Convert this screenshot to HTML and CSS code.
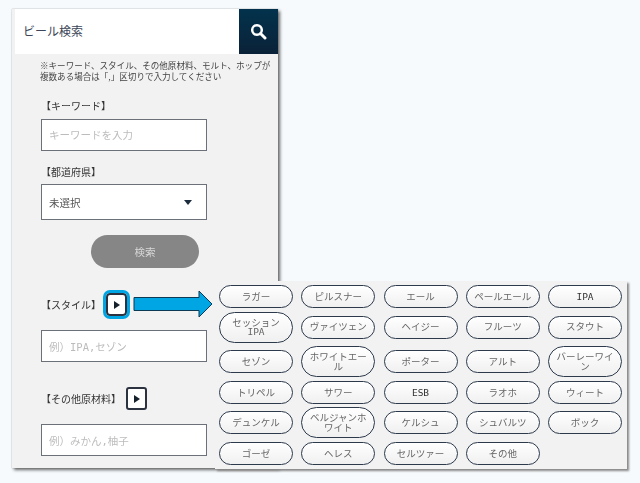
FILE: index.html
```html
<!DOCTYPE html>
<html lang="ja">
<head>
<meta charset="utf-8">
<title>ビール検索</title>
<link rel="stylesheet" href="styles.css">
</head>
<body>
<main class="panel">
  <header class="head">
    <h1 class="title">ビール検索</h1>
    <div class="search-btn">
      <svg width="17" height="17" viewBox="0 0 17 17"><circle cx="7" cy="7" r="4.8" fill="none" stroke="#fff" stroke-width="2.500"/><path d="M10.500 10.500L15 15" stroke="#fff" stroke-width="3" stroke-linecap="round"/></svg>
    </div>
  </header>
  <p class="note">※キーワード、スタイル、その他原材料、モルト、ホップが<br>複数ある場合は「,」区切りで入力してください</p>
  <div class="form">
    <div class="label label-key">【キーワード】</div>
    <div class="field field-input field-key ph">キーワードを入力</div>
    <div class="label label-pref">【都道府県】</div>
    <div class="field field-select"><span>未選択</span><i class="caret"></i></div>
    <div class="submit">検索</div>
    <div class="label-row row-style">
      <span class="label">【スタイル】</span>
      <span class="toggle toggle-on"><i class="tri"></i></span>
    </div>
    <div class="field field-input field-style ph">例）IPA,セゾン</div>
    <div class="label-row row-other">
      <span class="label">【その他原材料】</span>
      <span class="toggle"><i class="tri"></i></span>
    </div>
    <div class="field field-input field-other ph">例）みかん,柚子</div>
  </div>
</main>
<svg class="arrow" width="80" height="28" viewBox="0 0 80 28"><path d="M1 7.500H66V1L79 14L66 27V20.500H1Z" fill="#00a5e3" stroke="#0b3a55" stroke-width="1"/></svg>
<section class="popup">
  <span class="pill">ラガー</span><span class="pill">ピルスナー</span><span class="pill">エール</span><span class="pill">ペールエール</span><span class="pill latin">IPA</span>
  <span class="pill tall">セッション<br>IPA</span><span class="pill">ヴァイツェン</span><span class="pill">ヘイジー</span><span class="pill">フルーツ</span><span class="pill">スタウト</span>
  <span class="pill">セゾン</span><span class="pill tall">ホワイトエール</span><span class="pill">ポーター</span><span class="pill">アルト</span><span class="pill tall">バーレーワイン</span>
  <span class="pill">トリペル</span><span class="pill">サワー</span><span class="pill latin">ESB</span><span class="pill">ラオホ</span><span class="pill">ウィート</span>
  <span class="pill">デュンケル</span><span class="pill tall">ベルジャンホワイト</span><span class="pill">ケルシュ</span><span class="pill">シュバルツ</span><span class="pill">ボック</span>
  <span class="pill">ゴーゼ</span><span class="pill">ヘレス</span><span class="pill">セルツァー</span><span class="pill">その他</span>
</section>
</body>
</html>
```
FILE: styles.css
```css
html, body { margin: 0; padding: 0; }
body {
  width: 640px;
  height: 483px;
  overflow: hidden;
  position: relative;
  background: #f6fafd;
  font-family: "Noto Sans CJK JP", "Noto Sans", sans-serif;
  color: #555;
  filter: blur(0.35px);
}
.panel {
  position: absolute;
  left: 12px;
  top: 9px;
  width: 266px;
  height: 459px;
  background: #f2f2f2;
  box-shadow: 2px 2px 3px #666, 0 0 1px #999;
}
.head { display: flex; height: 45px; margin-left: 3px; background: #fff; }
.title {
  flex: 1;
  margin: 0;
  padding-left: 8px;
  font-size: 12px;
  font-weight: 400;
  line-height: 44px;
  color: #3c4658;
}
.search-btn {
  width: 39px;
  display: flex;
  align-items: center;
  justify-content: center;
  background: linear-gradient(#03324c, #0a2238);
}
.note {
  margin: 6px 0 0 28px;
  font-size: 8.55px;
  line-height: 11px;
  color: #444;
  white-space: nowrap;
}
.form { margin-left: 29px; width: 166px; }
.label { font-size: 10px; color: #333; line-height: 14px; display: block; }
.label-key { margin-top: 17px; }
.label-pref { margin-top: 14px; }
.field {
  box-sizing: border-box;
  background: #fff;
  border: 1.5px solid #6c7078;
  display: flex;
  align-items: center;
  padding-left: 7px;
  font-size: 10.500px;
}
.field-input { height: 32px; margin-top: 6px; }
.field-key { padding-bottom: 2px; }
.field-style { margin-top: 14px; }
.field-other { margin-top: 14px; }
.ph { color: #bcbcbc; font-family: "DejaVu Sans Mono", "Noto Sans CJK JP", monospace; }
.field-select { height: 36px; margin-top: 5px; justify-content: space-between; padding-right: 14px; color: #555; }
.caret {
  width: 0; height: 0;
  border-left: 4px solid transparent;
  border-right: 4px solid transparent;
  border-top: 5px solid #1c2c3c;
}
.submit {
  width: 108px;
  height: 33px;
  margin: 15px 0 0 50px;
  border-radius: 17px;
  background: #868686;
  color: #d8d8d8;
  font-size: 10.500px;
  line-height: 33px;
  text-align: center;
}
.label-row { display: flex; align-items: center; gap: 5px; }
.row-style { margin-top: 25px; }
.row-other { margin-top: 25px; }
.toggle {
  box-sizing: border-box;
  width: 21px;
  height: 23px;
  background: #fff;
  border: 2px solid #2c3240;
  border-radius: 3px;
  display: flex;
  align-items: center;
  justify-content: center;
}
.toggle-on { outline: 3.5px solid #00a5e3; outline-offset: 0; border-radius: 4px; }
.tri {
  width: 0; height: 0;
  border-top: 4px solid transparent;
  border-bottom: 4px solid transparent;
  border-left: 6px solid #14202c;
}
.arrow { position: absolute; left: 133px; top: 290px; }
.popup {
  position: absolute;
  left: 215px;
  top: 281px;
  width: 412px;
  height: 188px;
  box-sizing: border-box;
  padding: 4px 5px 0 4px;
  background: #f2f2f2;
  box-shadow: 2px 2px 2px #888;
  display: grid;
  grid-template-columns: repeat(5, 74px);
  grid-template-rows: 23px 31px 31px 23px 31px 23px;
  column-gap: 8.25px;
  row-gap: 3.6px;
  align-items: center;
}
.pill {
  box-sizing: border-box;
  height: 23px;
  border: 1.7px solid #2c3a4c;
  border-radius: 16px;
  background: linear-gradient(#fff, #f0f0f0);
  display: flex;
  align-items: center;
  justify-content: center;
  text-align: center;
  padding: 0 6px;
  font-family: "DejaVu Sans Mono", "Noto Sans CJK JP", monospace;
  font-size: 9.500px;
  line-height: 9.500px;
  color: #666;
}
.tall { height: 31px; }
.latin { color: #333; }
```
